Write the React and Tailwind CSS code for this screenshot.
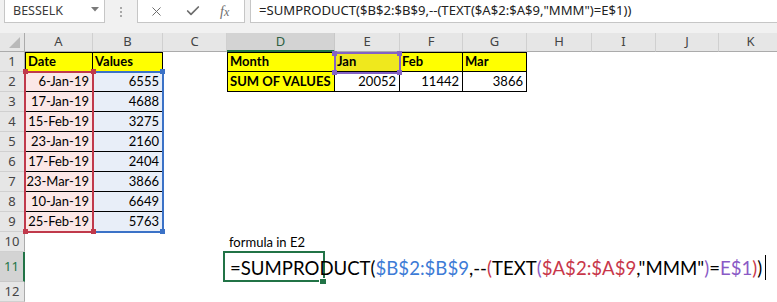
import { X, Check } from 'lucide-react';

const COLS = [
  { k: 'A', w: 'w-[68px]' },
  { k: 'B', w: 'w-[70px]' },
  { k: 'C', w: 'w-[64px]' },
  { k: 'D', w: 'w-[108px]' },
  { k: 'E', w: 'w-[65px]' },
  { k: 'F', w: 'w-[63px]' },
  { k: 'G', w: 'w-[64px]' },
  { k: 'H', w: 'w-[65px]' },
  { k: 'I', w: 'w-[64px]' },
  { k: 'J', w: 'w-[63px]' },
  { k: 'K', w: 'w-[64px]' },
];

const YEL = 'bg-[#ffff00] font-bold';
const BOX = 'border-r border-b border-black';
const PINK = `bg-[#fbe7e7] border-l ${BOX}`;
const BLUE = `bg-[#e8eef8] ${BOX}`;

const dates = [
  ['6-Jan-19', '6555'],
  ['17-Jan-19', '4688'],
  ['15-Feb-19', '3275'],
  ['23-Jan-19', '2160'],
  ['17-Feb-19', '2404'],
  ['23-Mar-19', '3866'],
  ['10-Jan-19', '6649'],
  ['25-Feb-19', '5763'],
];

const rows = [
  {
    n: 1,
    cells: {
      A: { t: 'Date', c: `${YEL} border-l border-t ${BOX}` },
      B: { t: 'Values', c: `${YEL} border-t ${BOX}` },
      D: { t: 'Month', c: `${YEL} border-l border-t ${BOX}` },
      E: { t: 'Jan', c: `bg-[#efe81d] font-bold border-t ${BOX}` },
      F: { t: 'Feb', c: `${YEL} border-t ${BOX}` },
      G: { t: 'Mar', c: `${YEL} border-t ${BOX}` },
    },
  },
  ...dates.map(([d, v], i) => ({
    n: i + 2,
    cells: {
      A: { t: d, r: true, c: PINK },
      B: { t: v, r: true, c: BLUE },
      ...(i === 0
        ? {
            D: { t: 'SUM OF VALUES', c: `${YEL} border-l ${BOX}` },
            E: { t: '20052', r: true, c: BOX },
            F: { t: '11442', r: true, c: BOX },
            G: { t: '3866', r: true, c: BOX },
          }
        : {}),
    },
  })),
  { n: 10, cells: { D: { t: 'formula in E2', c: 'text-[12.5px]' } } },
  { n: 11, tall: true, cells: {} },
  { n: 12, cells: {} },
];

function Formula() {
  return (
    <span className="text-[18.6px] leading-none text-black">
      =SUMPRODUCT(<span className="text-[#3d7bd6]">$B$2:$B$9</span>,--
      <span className="text-[#c8374a]">(</span>TEXT
      <span className="text-[#8a5ac6]">(</span>
      <span className="text-[#c8374a]">$A$2:$A$9</span>,"MMM"
      <span className="text-[#8a5ac6]">)</span>=
      <span className="text-[#8a5ac6]">E$1</span>
      <span className="text-[#c8374a]">)</span>)
    </span>
  );
}

function TopBar() {
  return (
    <div className="flex h-[33px] items-start bg-[#f1f1f1] [font-family:'Noto_Sans',sans-serif]">
      <div className="ml-[4px] flex h-[23px] w-[101px] items-center justify-between border border-t-0 border-[#c6c6c6] bg-white pl-[8px] pr-[5px]">
        <span className="text-[12.5px] text-[#3a3a3a]">BESSELK</span>
        <svg width="8" height="5" viewBox="0 0 8 5" className="mb-[3px]">
          <polygon points="0,0 8,0 4,4.5" fill="#7a7a7a" />
        </svg>
      </div>
      <div className="flex h-[23px] w-[32px] flex-col items-center justify-center gap-[2px]">
        <span className="h-[2px] w-[2px] bg-[#a8a8a8]" />
        <span className="h-[2px] w-[2px] bg-[#a8a8a8]" />
        <span className="h-[2px] w-[2px] bg-[#a8a8a8]" />
      </div>
      <div className="flex h-[23px] w-[108px] items-center border border-t-0 border-[#c6c6c6] bg-white pl-[11px]">
        <X className="h-[15px] w-[15px] text-[#6d6d6d]" strokeWidth={1.6} />
        <Check className="ml-[21px] h-[16px] w-[16px] text-[#6d6d6d]" strokeWidth={2.6} />
        <span className="ml-[19px] [font-family:'Liberation_Serif',serif] text-[14px] italic text-[#6d6d6d]">
          f<span className="text-[12px]">x</span>
        </span>
      </div>
      <div className="ml-[5px] flex h-[23px] flex-1 items-center border border-t-0 border-r-0 border-[#c6c6c6] bg-white pl-[8px]">
        <span className="whitespace-nowrap text-[13.1px] text-[#222]">
          =SUMPRODUCT($B$2:$B$9,--(TEXT($A$2:$A$9,"MMM")=E$1))
        </span>
      </div>
    </div>
  );
}

function HeaderRow() {
  return (
    <div className="flex h-[19px] [font-family:'Noto_Sans',sans-serif] text-[13px]">
      <div className="relative w-[25px] shrink-0 border-r border-b border-[#ababab] bg-[#e6e6e6]">
        <svg width="11" height="11" viewBox="0 0 11 11" className="absolute bottom-[3px] right-[4px]">
          <polygon points="11,0 11,11 0,11" fill="#b9b9b9" />
        </svg>
      </div>
      {COLS.map((col) =>
        col.k === 'D' ? (
          <div
            key={col.k}
            className={`${col.w} flex shrink-0 items-center justify-center border-r border-b-2 border-r-[#c8c8c8] border-b-[#217346] bg-[#d3d3d3] text-[#2f5f42]`}
          >
            {col.k}
          </div>
        ) : (
          <div
            key={col.k}
            className={`${col.w} flex shrink-0 items-center justify-center border-r border-b border-r-[#d0d0d0] border-b-[#ababab] bg-[#e6e6e6] text-[#444]`}
          >
            {col.k}
          </div>
        )
      )}
    </div>
  );
}

function SheetRow({ row }) {
  const active = row.n === 11;
  return (
    <div className={`flex ${row.tall ? 'h-[30px]' : 'h-[20px]'}`}>
      <div
        className={
          active
            ? 'flex w-[25px] shrink-0 items-center justify-center border-r-2 border-b border-r-[#217346] border-b-[#c8c8c8] bg-[#d3d3d3] [font-family:Noto_Sans,sans-serif] text-[13px] text-[#217346]'
            : 'flex w-[25px] shrink-0 items-center justify-center border-r border-b border-r-[#ababab] border-b-[#d0d0d0] bg-[#e6e6e6] [font-family:Noto_Sans,sans-serif] text-[13px] text-[#444]'
        }
      >
        {row.n}
      </div>
      {COLS.map((col) => {
        const cell = row.cells[col.k];
        if (active && col.k === 'D') {
          return (
            <div key={col.k} className={`${col.w} relative z-10 flex shrink-0 items-end overflow-visible whitespace-nowrap pb-[4px] pl-[3px]`}>
              <Formula />
            </div>
          );
        }
        if (!cell) return <div key={col.k} className={`${col.w} shrink-0`} />;
        return (
          <div
            key={col.k}
            className={`${col.w} flex shrink-0 items-end overflow-visible whitespace-nowrap pb-[1px] text-[13px] leading-[17px] text-black ${cell.c} ${
              cell.r ? 'justify-end pr-[3px]' : 'pl-[2px]'
            }`}
          >
            {cell.t}
          </div>
        );
      })}
    </div>
  );
}

export default function App() {
  return (
    <div className="h-[302px] w-[777px] overflow-hidden bg-white [font-family:Lato,'Liberation_Sans',sans-serif]">
      <TopBar />
      <div className="relative">
        <HeaderRow />
        {rows.map((r) => (
          <SheetRow key={r.n} row={r} />
        ))}

        {/* range highlights drawn while editing the formula */}
        <div className="pointer-events-none absolute left-[92px] top-[38px] h-[162px] w-[72px] border-2 border-[#3b72c7]" />
        <div className="absolute left-[160px] top-[36px] h-[5px] w-[5px] bg-[#3b72c7]" />
        <div className="absolute left-[160px] top-[196px] h-[5px] w-[5px] bg-[#3b72c7]" />
        <div className="pointer-events-none absolute left-[24px] top-[38px] h-[162px] w-[70px] border-2 border-[#c0394b]" />
        <div className="absolute left-[23px] top-[36px] h-[5px] w-[5px] bg-[#c0394b]" />
        <div className="absolute left-[91px] top-[36px] h-[5px] w-[5px] bg-[#c0394b]" />
        <div className="absolute left-[23px] top-[196px] h-[5px] w-[5px] bg-[#c0394b]" />
        <div className="absolute left-[91px] top-[196px] h-[5px] w-[5px] bg-[#c0394b]" />

        <div className="pointer-events-none absolute left-[334px] top-[19px] h-[22px] w-[67px] border-2 border-[#8462c4]" />
        <div className="absolute left-[332px] top-[18px] h-[5px] w-[5px] bg-[#8462c4]" />
        <div className="absolute left-[397px] top-[18px] h-[5px] w-[5px] bg-[#8462c4]" />
        <div className="absolute left-[332px] top-[37px] h-[5px] w-[5px] bg-[#8462c4]" />
        <div className="absolute left-[397px] top-[37px] h-[5px] w-[5px] bg-[#8462c4]" />

        <div className="pointer-events-none absolute left-[223px] top-[218px] h-[31px] w-[102px] border-2 border-[#217346]" />
        <div className="absolute left-[319px] top-[245px] h-[6px] w-[7px] border-l border-t border-white bg-[#217346]" />
        <div className="absolute left-[765px] top-[222px] h-[25px] w-px bg-black" />
      </div>
    </div>
  );
}
